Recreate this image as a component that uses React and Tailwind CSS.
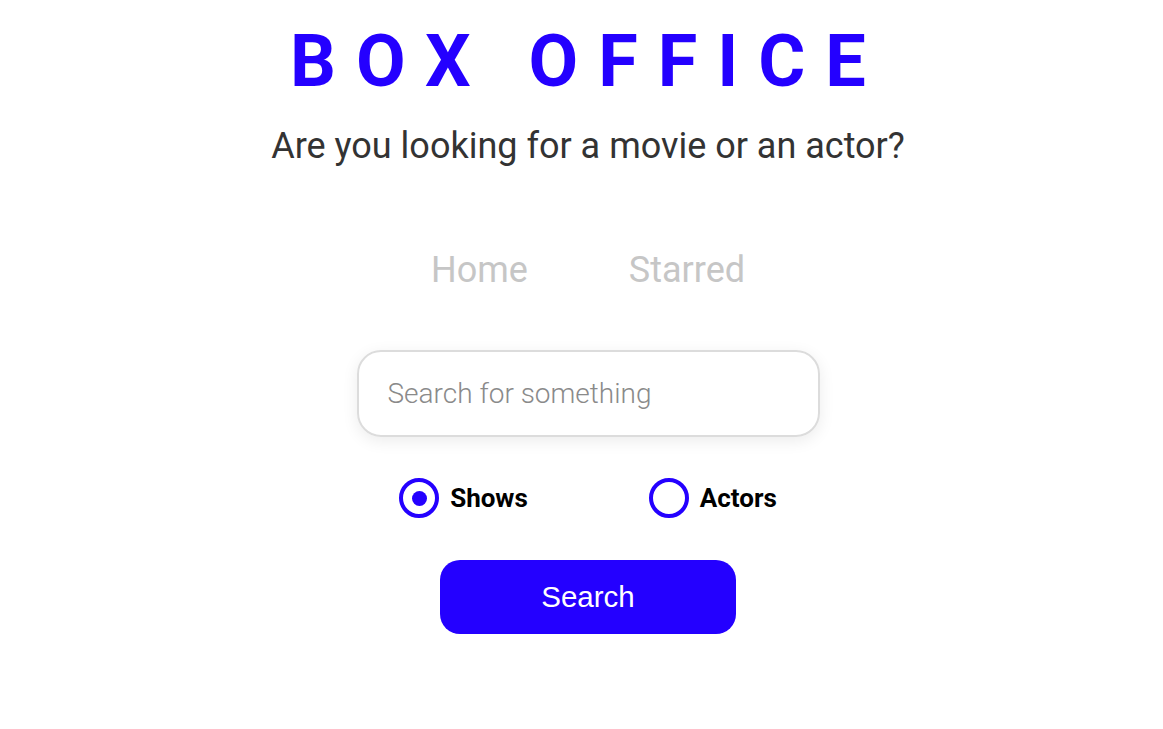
export default function App() {
  return (
    <div className="min-h-[729px] bg-white flex flex-col items-center pl-[13px]" style={{ fontFamily: 'Roboto, "Liberation Sans", sans-serif' }}>
      <div className="flex flex-col items-center pt-[22px]">
        <h1 className="text-[72px] leading-[80px] font-bold tracking-[20px] text-[#2400ff]">BOX OFFICE</h1>
        <p className="mt-[23px] text-[36px] leading-[42px] text-[#333333]">Are you looking for a movie or an actor?</p>
      </div>
      <nav className="mt-[81px] flex gap-[101px] text-[36px] leading-[44px] text-[#c6c6c6]">
        <a>Home</a>
        <a>Starred</a>
      </nav>
      <div className="mt-[58px] w-[463px] h-[87px] rounded-[24px] border-2 border-[#dcdcdc] shadow-[0_4px_16px_rgba(0,0,0,0.08)] flex items-center px-[29px]">
        <span className="text-[28px] font-light text-[#8a8a8a]">Search for something</span>
      </div>
      <div className="mt-[41px] flex gap-[121px]">
        <label className="flex items-center gap-[11px]">
          <span className="w-[40px] h-[40px] rounded-full border-[4px] border-[#2400ff] flex items-center justify-center">
            <span className="w-[15px] h-[15px] rounded-full bg-[#2400ff]" />
          </span>
          <span className="text-[26px] leading-[30px] font-bold text-black">Shows</span>
        </label>
        <label className="flex items-center gap-[11px]">
          <span className="w-[40px] h-[40px] rounded-full border-[4px] border-[#2400ff]" />
          <span className="text-[26px] leading-[30px] font-bold text-black">Actors</span>
        </label>
      </div>
      <button className="mt-[42px] w-[296px] h-[74px] rounded-[20px] bg-[#2400ff] text-white text-[29.5px]" style={{ fontFamily: '"Liberation Sans", Arial, sans-serif' }}>Search</button>
    </div>
  );
}
